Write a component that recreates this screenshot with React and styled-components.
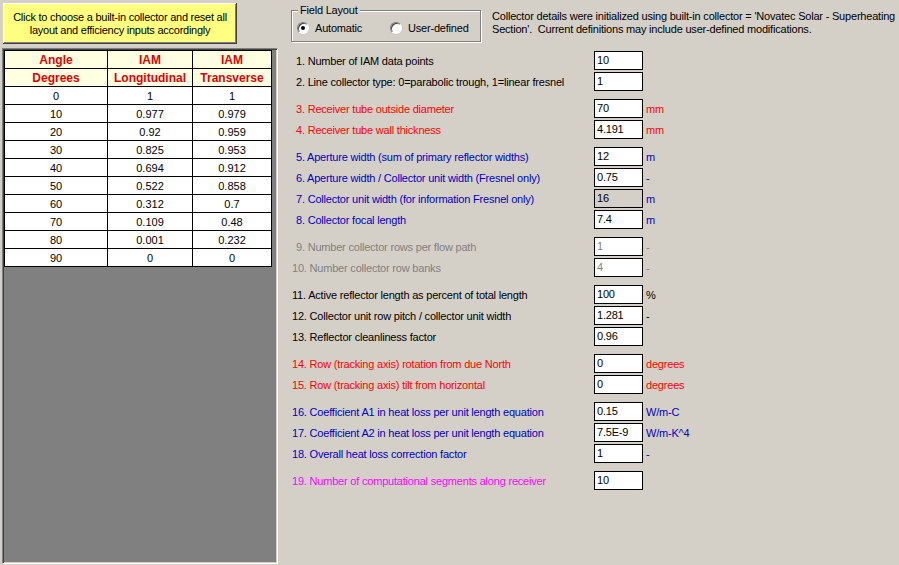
import React from "react";
import styled, { createGlobalStyle } from "styled-components";

const Global = createGlobalStyle`
  html, body {
    margin: 0;
    padding: 0;
    background: #d4d0c8;
    width: 899px;
    height: 565px;
    overflow: hidden;
  }
  body {
    font-family: "Liberation Sans", Arial, sans-serif;
    font-size: 11px;
    color: #000;
  }
  * { box-sizing: border-box; }
`;

const Page = styled.div`
  display: flex;
  width: 899px;
  height: 565px;
  background: #d4d0c8;
`;

const LeftColumn = styled.div`
  display: flex;
  flex-direction: column;
  width: 278px;
  padding: 3px 0 1px 2px;
`;

const ChooseButton = styled.button`
  margin: 0 0 0 1px;
  width: 234px;
  height: 41px;
  padding: 0 4px;
  background: #ffff80;
  border: none;
  box-shadow: inset -1px -1px 0 #404040, inset 1px 1px 0 #ffffff,
    inset -2px -2px 0 #808080;
  font-family: "Liberation Sans", Arial, sans-serif;
  font-size: 11px;
  line-height: 13px;
  letter-spacing: -0.25px;
  color: #000;
  text-align: center;
  cursor: default;
`;

const GridPanel = styled.div`
  margin-top: 4px;
  width: 276px;
  flex: 1;
  background: #808080;
  border: 1px solid;
  border-color: #808080 #ffffff #ffffff #808080;
  box-shadow: inset 1px 1px 0 #404040, inset -1px -1px 0 #d4d0c8;
  padding: 1px 0 0 1px;
`;

const Table = styled.div`
  width: 268px;
  border-left: 1px solid #000;
  border-top: 1px solid #000;
`;

const TableRow = styled.div`
  display: grid;
  grid-template-columns: 103px 85px 79px;
  height: 18px;
`;

const Cell = styled.div`
  border-right: 1px solid #000;
  border-bottom: 1px solid #000;
  display: flex;
  align-items: center;
  justify-content: center;
  background: ${(p) => (p.$head ? "#ffffe1" : "#ffffff")};
  color: ${(p) => (p.$head ? "#e00000" : "#000")};
  font-weight: ${(p) => (p.$head ? 700 : 400)};
  font-size: ${(p) => (p.$head ? "12px" : "11px")};
  line-height: 14px;
`;

const RightColumn = styled.div`
  flex: 1;
  display: flex;
  flex-direction: column;
  padding-left: 13px;
`;

const TopBar = styled.div`
  display: flex;
  height: 50px;
`;

const GroupBox = styled.div`
  position: relative;
  margin-top: 10px;
  width: 190px;
  height: 32px;
  border: 1px solid #808080;
  box-shadow: 1px 1px 0 #ffffff, inset 1px 1px 0 #ffffff;
  display: flex;
  align-items: center;
  padding: 3px 0 0 5px;
`;

const Legend = styled.span`
  position: absolute;
  top: -7px;
  left: 6px;
  padding: 0 2px;
  background: #d4d0c8;
  line-height: 13px;
  letter-spacing: -0.2px;
`;

const RadioOption = styled.label`
  display: flex;
  align-items: center;
  gap: 6px;
  width: ${(p) => p.$w}px;
  letter-spacing: -0.2px;
`;

const RadioCircle = styled.span`
  width: 12px;
  height: 12px;
  border-radius: 50%;
  background: #ffffff;
  border: 1px solid;
  border-color: #808080 #ffffff #ffffff #808080;
  box-shadow: inset 1px 1px 0 #404040, 0 0 0 0.5px #c8c4bc;
  display: flex;
  align-items: center;
  justify-content: center;
  &::after {
    content: "";
    width: 4px;
    height: 4px;
    border-radius: 50%;
    background: ${(p) => (p.$checked ? "#000" : "transparent")};
  }
`;

const InfoText = styled.div`
  margin-left: 11px;
  padding-top: 10px;
  line-height: 13px;
  letter-spacing: -0.2px;
  white-space: pre;
`;

const Form = styled.div`
  display: flex;
  flex-direction: column;
  gap: 6px;
`;

const FieldGroup = styled.div`
  display: flex;
  flex-direction: column;
`;

const tones = {
  black: "#000000",
  red: "#ff0000",
  blue: "#0000c0",
  grey: "#808080",
  magenta: "#ff00ff",
};

const FieldRow = styled.div`
  display: flex;
  align-items: center;
  height: 21px;
  color: ${(p) => tones[p.$tone]};
`;

const FieldLabel = styled.span`
  width: 303px;
  padding-left: ${(p) => (p.$wide ? 1 : 5)}px;
  letter-spacing: -0.2px;
  white-space: nowrap;
`;

const ValueBox = styled.input`
  width: 49px;
  height: 19px;
  margin: 0;
  padding: 0 0 2px 2px;
  border: 1px solid #000;
  border-radius: 0;
  outline: none;
  background: ${(p) => (p.$locked ? "#d4d0c8" : "#ffffff")};
  color: ${(p) => (p.$dim ? "#808080" : "#000")};
  font-family: "Liberation Sans", Arial, sans-serif;
  font-size: 11px;
  letter-spacing: -0.2px;
`;

const Unit = styled.span`
  margin-left: 3px;
  letter-spacing: -0.2px;
`;

const iamRows = [
  ["0", "1", "1"],
  ["10", "0.977", "0.979"],
  ["20", "0.92", "0.959"],
  ["30", "0.825", "0.953"],
  ["40", "0.694", "0.912"],
  ["50", "0.522", "0.858"],
  ["60", "0.312", "0.7"],
  ["70", "0.109", "0.48"],
  ["80", "0.001", "0.232"],
  ["90", "0", "0"],
];

const groups = [
  [
    { n: 1, tone: "black", text: "Number of IAM data points", value: "10" },
    { n: 2, tone: "black", text: "Line collector type: 0=parabolic trough, 1=linear fresnel", value: "1" },
  ],
  [
    { n: 3, tone: "red", text: "Receiver tube outside diameter", value: "70", unit: "mm" },
    { n: 4, tone: "red", text: "Receiver tube wall thickness", value: "4.191", unit: "mm" },
  ],
  [
    { n: 5, tone: "blue", text: "Aperture width (sum of primary reflector widths)", value: "12", unit: "m" },
    { n: 6, tone: "blue", text: "Aperture width / Collector unit width (Fresnel only)", value: "0.75", unit: "-" },
    { n: 7, tone: "blue", text: "Collector unit width (for information Fresnel only)", value: "16", unit: "m", locked: true },
    { n: 8, tone: "blue", text: "Collector focal length", value: "7.4", unit: "m" },
  ],
  [
    { n: 9, tone: "grey", text: "Number collector rows per flow path", value: "1", unit: "-", dim: true },
    { n: 10, tone: "grey", text: "Number collector row banks", value: "4", unit: "-", dim: true },
  ],
  [
    { n: 11, tone: "black", text: "Active reflector length as percent of total length", value: "100", unit: "%" },
    { n: 12, tone: "black", text: "Collector unit row pitch / collector unit width", value: "1.281", unit: "-" },
    { n: 13, tone: "black", text: "Reflector cleanliness factor", value: "0.96" },
  ],
  [
    { n: 14, tone: "red", text: "Row (tracking axis) rotation from due North", value: "0", unit: "degrees" },
    { n: 15, tone: "red", text: "Row (tracking axis) tilt from horizontal", value: "0", unit: "degrees" },
  ],
  [
    { n: 16, tone: "blue", text: "Coefficient A1 in heat loss per unit length equation", value: "0.15", unit: "W/m-C" },
    { n: 17, tone: "blue", text: "Coefficient A2 in heat loss per unit length equation", value: "7.5E-9", unit: "W/m-K^4" },
    { n: 18, tone: "blue", text: "Overall heat loss correction factor", value: "1", unit: "-" },
  ],
  [
    { n: 19, tone: "magenta", text: "Number of computational segments along receiver", value: "10" },
  ],
];

export default function App() {
  return (
    <>
      <Global />
      <Page>
        <LeftColumn>
          <ChooseButton>
            Click to choose a built-in collector and reset all
            <br />
            layout and efficiency inputs accordingly
          </ChooseButton>
          <GridPanel>
            <Table>
              <TableRow>
                <Cell $head>Angle</Cell>
                <Cell $head>IAM</Cell>
                <Cell $head>IAM</Cell>
              </TableRow>
              <TableRow>
                <Cell $head>Degrees</Cell>
                <Cell $head>Longitudinal</Cell>
                <Cell $head>Transverse</Cell>
              </TableRow>
              {iamRows.map((r) => (
                <TableRow key={r[0]}>
                  {r.map((v, i) => (
                    <Cell key={i}>{v}</Cell>
                  ))}
                </TableRow>
              ))}
            </Table>
          </GridPanel>
        </LeftColumn>
        <RightColumn>
          <TopBar>
            <GroupBox>
              <Legend>Field Layout</Legend>
              <RadioOption $w={93}>
                <RadioCircle $checked />
                Automatic
              </RadioOption>
              <RadioOption $w={90}>
                <RadioCircle />
                User-defined
              </RadioOption>
            </GroupBox>
            <InfoText>
              {"Collector details were initialized using built-in collector = 'Novatec Solar - Superheating\nSection'.  Current definitions may include user-defined modifications."}
            </InfoText>
          </TopBar>
          <Form>
            {groups.map((g, gi) => (
              <FieldGroup key={gi}>
                {g.map((f) => (
                  <FieldRow key={f.n} $tone={f.tone}>
                    <FieldLabel $wide={f.n >= 10}>
                      {f.n}. {f.text}
                    </FieldLabel>
                    <ValueBox
                      readOnly
                      defaultValue={f.value}
                      $locked={f.locked}
                      $dim={f.dim}
                    />
                    {f.unit && <Unit>{f.unit}</Unit>}
                  </FieldRow>
                ))}
              </FieldGroup>
            ))}
          </Form>
        </RightColumn>
      </Page>
    </>
  );
}
